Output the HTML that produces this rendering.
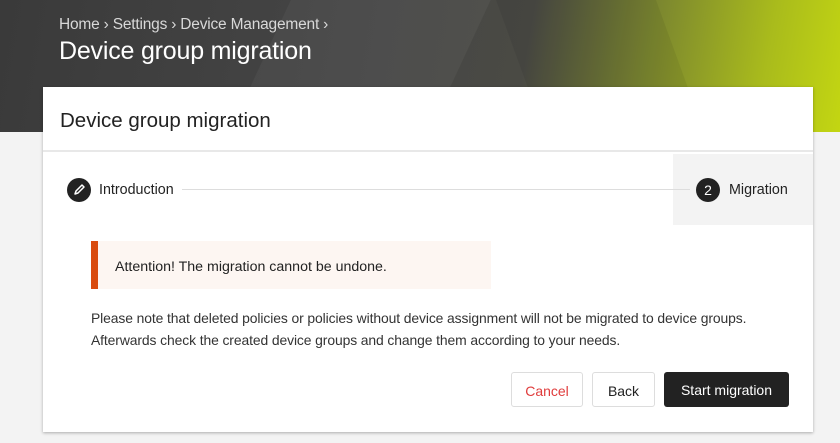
<!DOCTYPE html>
<html><head><meta charset="utf-8"><style>
*{margin:0;padding:0;box-sizing:border-box}
body{width:840px;height:443px;background:#f3f3f3;font-family:"Liberation Sans",sans-serif;position:relative;overflow:hidden;color:#222}
.hdr{position:absolute;left:0;top:0;width:840px;height:132px;background:linear-gradient(100deg,#3a3a3a 0%,#464646 45%,#4a4a44 62%,#7a8530 76%,#a9bb1c 90%,#c3d612 100%)}
.hdr .s1{position:absolute;left:260px;top:0;width:200px;height:132px;background:rgba(255,255,255,.04);transform:skewX(-25deg)}
.hdr .s2{position:absolute;left:520px;top:0;width:160px;height:132px;background:rgba(0,0,0,.06);transform:skewX(20deg)}
.bc{position:absolute;left:59px;top:16px;color:#d8d8d8;font-size:15.5px;letter-spacing:-.2px}
.tt{position:absolute;left:59px;top:37px;color:#fff;font-size:25px;letter-spacing:-.2px}
.card{position:absolute;left:43px;top:87px;width:770px;height:345px;background:#fff;box-shadow:0 1px 3px rgba(0,0,0,.3)}
.ch{height:65px;border-bottom:2px solid #e8e8e8;padding:22px 0 0 17px;font-size:20.5px;color:#222}
.step{position:absolute;top:65px;left:0;width:770px;height:73px}
.mig{position:absolute;right:0;top:2px;width:140px;height:71px;background:#f3f3f3}
.circ{position:absolute;width:24px;height:24px;border-radius:50%;background:#222;color:#fff;font-size:14px;text-align:center;line-height:24px}
.lbl{position:absolute;font-size:14.3px;color:#222}
.line{position:absolute;left:139px;top:37px;width:508px;height:1px;background:#ddd}
.alert{position:absolute;left:48px;top:154px;width:400px;height:48px;background:#fdf6f2;border-left:7px solid #d94b0e;font-size:14.2px;padding:18px 0 0 17px}
.txt{position:absolute;left:48px;top:220px;font-size:13.9px;line-height:22px;color:#333;white-space:nowrap;letter-spacing:-.1px}
.btn{position:absolute;top:285px;height:35px;border-radius:3px;font-size:14px;text-align:center;line-height:37px}
</style></head><body>
<div class="hdr"><div class="s1"></div><div class="s2"></div>
<div class="bc">Home › Settings › Device Management ›</div>
<div class="tt">Device group migration</div></div>
<div class="card">
<div class="ch">Device group migration</div>
<div class="step">
<div class="mig"></div>
<div class="line"></div>
<div class="circ" style="left:24px;top:26px"><svg width="24" height="24" viewBox="0 0 24 24"><path d="M8 16l1-3 6-6 2 2-6 6z M8 16l3-1" fill="none" stroke="#fff" stroke-width="1.5" stroke-linejoin="round"/></svg></div>
<div class="lbl" style="left:56px;top:30px">Introduction</div>
<div class="circ" style="left:653px;top:26px">2</div>
<div class="lbl" style="left:686px;top:30px">Migration</div>
</div>
<div class="alert">Attention! The migration cannot be undone.</div>
<div class="txt">Please note that deleted policies or policies without device assignment will not be migrated to device groups.<br>Afterwards check the created device groups and change them according to your needs.</div>
<div class="btn" style="left:468px;width:72px;border:1px solid #ddd;color:#e03c3c">Cancel</div>
<div class="btn" style="left:549px;width:63px;border:1px solid #ddd;color:#222">Back</div>
<div class="btn" style="left:621px;width:125px;background:#222;color:#fff">Start migration</div>
</div>
</body></html>
